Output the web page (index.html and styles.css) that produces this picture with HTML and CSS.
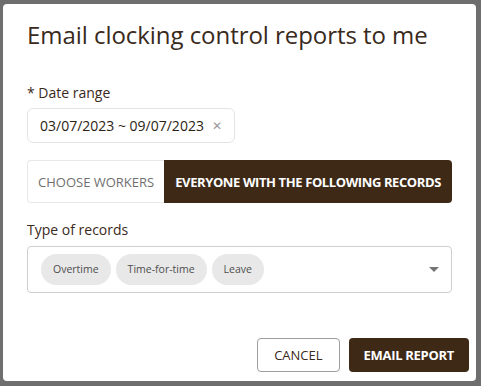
FILE: index.html
```html
<!DOCTYPE html>
<html lang="en">
<head>
    <meta charset="UTF-8">
    <title>Email clocking control reports</title>
    <link rel="stylesheet" href="styles.css">
</head>
<body>
    <div class="dialog">
        <h1>Email clocking control reports to me</h1>

        <label class="field-label">* Date range</label>
        <div class="date-input">
            <span>03/07/2023 ~ 09/07/2023</span>
            <span class="clear">&#x2715;</span>
        </div>

        <div class="toggle">
            <button class="toggle-option">CHOOSE WORKERS</button>
            <button class="toggle-option active">EVERYONE WITH THE FOLLOWING RECORDS</button>
        </div>

        <label class="field-label">Type of records</label>
        <div class="select">
            <div class="chips">
                <span class="chip">Overtime</span>
                <span class="chip">Time-for-time</span>
                <span class="chip">Leave</span>
            </div>
            <svg class="caret" width="10" height="5" viewBox="0 0 10 5"><path d="M0 0h10L5 5z" fill="#757575"/></svg>
        </div>

        <div class="actions">
            <button class="button secondary">CANCEL</button>
            <button class="button primary">EMAIL REPORT</button>
        </div>
    </div>
</body>
</html>
```
FILE: styles.css
```css
body {
    margin: 0;
    padding: 4px 5px 5px 3px;
    background-color: #6e6e6e;
    font-family: 'Open Sans', sans-serif;
    color: #3a2a1c;
}
.dialog {
    background-color: #fff;
    border-radius: 4px;
    height: 377px;
    box-sizing: border-box;
    padding: 15px 24px 0 24px;
    display: flex;
    flex-direction: column;
}
h1 {
    margin: 0;
    font-size: 24px;
    font-weight: 500;
    line-height: 32px;
    color: #3a2a1c;
    letter-spacing: -0.05px;
}
.field-label {
    display: block;
    font-size: 14px;
    line-height: 20px;
    color: #3a2a1c;
    margin-top: 32px;
}
.date-input {
    align-self: flex-start;
    display: flex;
    align-items: center;
    gap: 8px;
    height: 35px;
    box-sizing: border-box;
    margin-top: 5px;
    padding: 0 12px;
    border: 1px solid #e4e4e4;
    border-radius: 6px;
    font-size: 14px;
    color: #2b1e12;
}
.clear {
    color: #9a9a9a;
    font-size: 12px;
}
.toggle {
    display: flex;
    margin-top: 17px;
    width: 425px;
    height: 43px;
}
.toggle-option {
    border: 1px solid #e8e8e8;
    border-right: none;
    background-color: #fff;
    color: #6f6f6f;
    font-family: 'Open Sans', sans-serif;
    font-size: 13px;
    padding: 0 10px;
    border-radius: 4px 0 0 4px;
}
.toggle-option.active {
    flex: 1;
    border: none;
    padding: 0;
    background-color: #3d2916;
    color: #fff;
    font-weight: 700;
    letter-spacing: -0.4px;
    border-radius: 0 4px 4px 0;
}
.toggle + .field-label {
    margin-top: 17px;
}
.select {
    display: flex;
    align-items: center;
    justify-content: space-between;
    width: 425px;
    height: 47px;
    box-sizing: border-box;
    margin-top: 6px;
    padding: 0 12px 0 13px;
    border: 1px solid #cfcfcf;
    border-radius: 4px;
}
.chips {
    display: flex;
    gap: 5px;
}
.chip {
    background-color: #e8e8e8;
    color: #4e4e4e;
    font-size: 10.5px;
    line-height: 31px;
    padding: 0 12px;
    border-radius: 16px;
}
.actions {
    display: flex;
    justify-content: flex-end;
    gap: 9px;
    margin-top: 45px;
    margin-right: -17px;
}
.button {
    height: 34px;
    border-radius: 4px;
    font-family: 'Open Sans', sans-serif;
    font-size: 13px;
    cursor: pointer;
}
.secondary {
    background-color: #fff;
    border: 1px solid #9e9e9e;
    color: #3a2a1c;
    padding: 0 16px;
}
.primary {
    background-color: #3d2916;
    border: none;
    color: #fff;
    font-weight: 700;
    padding: 0 15px;
    letter-spacing: -0.3px;
}
```
